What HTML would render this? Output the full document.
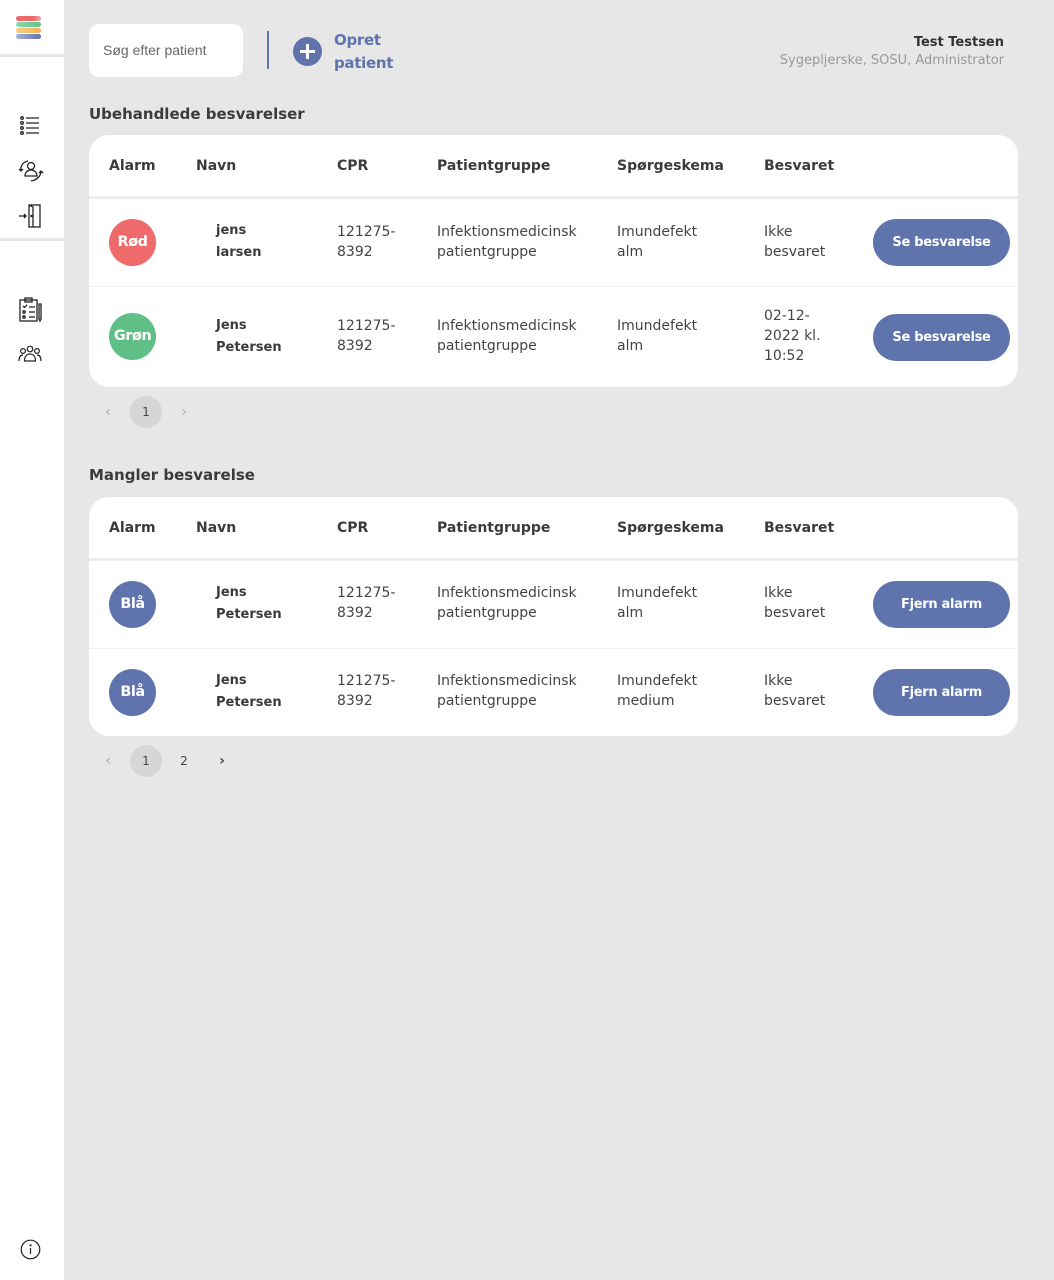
<!DOCTYPE html>
<html><head><meta charset="utf-8">
<style>
*{margin:0;padding:0;box-sizing:border-box}
body{width:1054px;height:1280px;background:#e7e7e7;font-family:"DejaVu Sans","Liberation Sans",sans-serif;color:#444;position:relative;overflow:hidden}
.a{position:absolute}
.side{left:0;top:0;width:64px;height:1280px;background:#fff}
.sep{left:0;width:64px;height:3px;background:#e7e7e7}
.stripe{left:16px;width:25px;height:5px;border-radius:3px}
.card{left:89px;width:929px;background:#fff;border-radius:20px}
.th{font-weight:bold;font-size:14px;color:#3b3b3b}
.td{font-size:14px;line-height:20px;color:#444}
.nm{font-weight:bold;font-size:13px;line-height:22px;color:#3b3b3b}
.circ{width:47px;height:47px;border-radius:50%;color:#fff;font-weight:bold;font-size:14.5px;text-align:center;line-height:47px;letter-spacing:-0.5px}
.btn{left:873px;width:137px;height:47px;border-radius:24px;background:#5f73ad;color:#fff;font-weight:bold;font-size:13px;text-align:center;line-height:47px;letter-spacing:-0.3px}
.hl{left:0;width:929px;height:3px;background:#ececec}
.rl{left:0;width:929px;height:1px;background:#efefef}
.pg{font-size:12px;color:#444;text-align:center;line-height:32px;width:32px;height:32px}
.h2{font-weight:bold;font-size:15px;color:#3b3b3b}
</style></head><body>
<div class="a side"></div>
<div class="a stripe" style="top:16px;background:linear-gradient(90deg,#ee6a6a 70%,#f3a9a9)"></div>
<div class="a stripe" style="top:22px;background:linear-gradient(90deg,#93dbb0,#5fbf85)"></div>
<div class="a stripe" style="top:28px;background:linear-gradient(90deg,#f5cf8a,#f3b04e)"></div>
<div class="a stripe" style="top:34px;background:linear-gradient(90deg,#a6b1d6,#5f73ad)"></div>
<div class="a sep" style="top:54px"></div>
<div class="a sep" style="top:238px"></div>
<svg class="a" style="left:19px;top:115px" width="22" height="22" viewBox="0 0 22 22" fill="none" stroke="#222" stroke-width="1.3"><circle cx="3" cy="3" r="1.3"/><circle cx="3" cy="8" r="1.3"/><circle cx="3" cy="13" r="1.3"/><circle cx="3" cy="18" r="1.3"/><path d="M7 3h13M7 8h13M7 13h13M7 18h13"/></svg>
<svg class="a" style="left:18px;top:159px" width="26" height="24" viewBox="0 0 26 24" fill="none" stroke="#222" stroke-width="1.3"><circle cx="13" cy="7" r="3.5"/><path d="M7 17c0-4 3-6 6-6s6 2 6 6z"/><path d="M10 2C5 3 2 7 3 12M1 10l2 2 2-2"/><path d="M23 12c0 5-4 9-10 10M21 14l2-2 2 2"/></svg>
<svg class="a" style="left:18px;top:203px" width="26" height="26" viewBox="0 0 26 26" fill="none" stroke="#222" stroke-width="1.3"><rect x="11" y="2" width="11" height="22"/><path d="M11 2l4 2v20"/><path d="M1 13h7M6 11l2 2-2 2"/><circle cx="13.5" cy="13" r="0.6"/></svg>
<svg class="a" style="left:19px;top:297px" width="24" height="26" viewBox="0 0 24 26" fill="none" stroke="#222" stroke-width="1.3"><rect x="1" y="3" width="17" height="21"/><rect x="6" y="1" width="7" height="4"/><path d="M4 9l1.5 1.5L8 8M10 10h6"/><circle cx="5" cy="15" r="1.2"/><path d="M10 15h6"/><circle cx="5" cy="20" r="1.2"/><path d="M10 20h6"/><path d="M20 7h2v15l-1 2-1-2z"/></svg>
<svg class="a" style="left:18px;top:345px" width="24" height="18" viewBox="0 0 24 18" fill="none" stroke="#222" stroke-width="1.2"><circle cx="12" cy="4" r="2.8"/><circle cx="5" cy="6" r="2.4"/><circle cx="19" cy="6" r="2.4"/><path d="M6.5 16c0-5 2.5-7 5.5-7s5.5 2 5.5 7zM1 16c0-4 1.5-6 4-6M23 16c0-4-1.5-6-4-6"/></svg>
<svg class="a" style="left:20px;top:1239px" width="21" height="21" viewBox="0 0 21 21" fill="none" stroke="#222" stroke-width="1.2"><circle cx="10.5" cy="10.5" r="9.3"/><path d="M10.5 9v6"/><circle cx="10.5" cy="6.3" r="0.5" fill="#222"/></svg>

<div class="a" style="left:89px;top:24px;width:154px;height:53px;background:#fff;border-radius:10px"></div>
<div class="a" style="left:103px;top:42px;font-size:14px;color:#666;font-family:'Liberation Sans',sans-serif">Søg efter patient</div>
<div class="a" style="left:267px;top:31px;width:2px;height:38px;background:#5f73ad"></div>
<div class="a" style="left:293px;top:37px;width:29px;height:29px;border-radius:50%;background:#5f73ad"></div>
<div class="a" style="left:300px;top:50px;width:15px;height:3px;background:#fff"></div>
<div class="a" style="left:306px;top:44px;width:3px;height:15px;background:#fff"></div>
<div class="a" style="left:334px;top:29px;font-size:15px;font-weight:bold;color:#5f73ad;line-height:23px;letter-spacing:-0.3px">Opret<br>patient</div>
<div class="a" style="right:50px;top:35px;font-size:13px;font-weight:bold;color:#333;text-align:right">Test Testsen</div>
<div class="a" style="right:50px;top:53px;font-size:13px;color:#999;text-align:right">Sygepljerske, SOSU, Administrator</div>

<div class="a h2" style="left:89px;top:105px">Ubehandlede besvarelser</div>
<div class="a card" style="top:135px;height:252px">
 <div class="a th" style="left:20px;top:23px">Alarm</div>
 <div class="a th" style="left:107px;top:23px">Navn</div>
 <div class="a th" style="left:248px;top:23px">CPR</div>
 <div class="a th" style="left:348px;top:23px">Patientgruppe</div>
 <div class="a th" style="left:528px;top:23px">Spørgeskema</div>
 <div class="a th" style="left:675px;top:23px">Besvaret</div>
 <div class="a hl" style="top:61px"></div>
 <div class="a circ" style="left:20px;top:84px;background:#ef6b6b">Rød</div>
 <div class="a nm" style="left:127px;top:85px">jens<br>larsen</div>
 <div class="a td" style="left:248px;top:87px">121275-<br>8392</div>
 <div class="a td" style="left:348px;top:87px">Infektionsmedicinsk<br>patientgruppe</div>
 <div class="a td" style="left:528px;top:87px">Imundefekt<br>alm</div>
 <div class="a td" style="left:675px;top:87px">Ikke<br>besvaret</div>
 <div class="a rl" style="top:151px"></div>
 <div class="a circ" style="left:20px;top:178px;background:#60bf86">Grøn</div>
 <div class="a nm" style="left:127px;top:180px">Jens<br>Petersen</div>
 <div class="a td" style="left:248px;top:181px">121275-<br>8392</div>
 <div class="a td" style="left:348px;top:181px">Infektionsmedicinsk<br>patientgruppe</div>
 <div class="a td" style="left:528px;top:181px">Imundefekt<br>alm</div>
 <div class="a td" style="left:675px;top:171px">02-12-<br>2022 kl.<br>10:52</div>
</div>
<div class="a btn" style="top:219px">Se besvarelse</div>
<div class="a btn" style="top:314px">Se besvarelse</div>
<div class="a pg" style="left:92px;top:396px;color:#aaa;font-size:14px">‹</div>
<div class="a pg" style="left:130px;top:396px;background:#d6d6d6;border-radius:50%">1</div>
<div class="a pg" style="left:168px;top:396px;color:#aaa;font-size:14px">›</div>

<div class="a h2" style="left:89px;top:466px">Mangler besvarelse</div>
<div class="a card" style="top:497px;height:239px">
 <div class="a th" style="left:20px;top:23px">Alarm</div>
 <div class="a th" style="left:107px;top:23px">Navn</div>
 <div class="a th" style="left:248px;top:23px">CPR</div>
 <div class="a th" style="left:348px;top:23px">Patientgruppe</div>
 <div class="a th" style="left:528px;top:23px">Spørgeskema</div>
 <div class="a th" style="left:675px;top:23px">Besvaret</div>
 <div class="a hl" style="top:61px"></div>
 <div class="a circ" style="left:20px;top:84px;background:#5f73ad">Blå</div>
 <div class="a nm" style="left:127px;top:85px">Jens<br>Petersen</div>
 <div class="a td" style="left:248px;top:86px">121275-<br>8392</div>
 <div class="a td" style="left:348px;top:86px">Infektionsmedicinsk<br>patientgruppe</div>
 <div class="a td" style="left:528px;top:86px">Imundefekt<br>alm</div>
 <div class="a td" style="left:675px;top:86px">Ikke<br>besvaret</div>
 <div class="a rl" style="top:151px"></div>
 <div class="a circ" style="left:20px;top:172px;background:#5f73ad">Blå</div>
 <div class="a nm" style="left:127px;top:173px">Jens<br>Petersen</div>
 <div class="a td" style="left:248px;top:174px">121275-<br>8392</div>
 <div class="a td" style="left:348px;top:174px">Infektionsmedicinsk<br>patientgruppe</div>
 <div class="a td" style="left:528px;top:174px">Imundefekt<br>medium</div>
 <div class="a td" style="left:675px;top:174px">Ikke<br>besvaret</div>
</div>
<div class="a btn" style="top:581px">Fjern alarm</div>
<div class="a btn" style="top:669px">Fjern alarm</div>
<div class="a pg" style="left:92px;top:745px;color:#aaa;font-size:14px">‹</div>
<div class="a pg" style="left:130px;top:745px;background:#d6d6d6;border-radius:50%">1</div>
<div class="a pg" style="left:168px;top:745px">2</div>
<div class="a pg" style="left:206px;top:745px;font-weight:bold;font-size:14px">›</div>
</body></html>
